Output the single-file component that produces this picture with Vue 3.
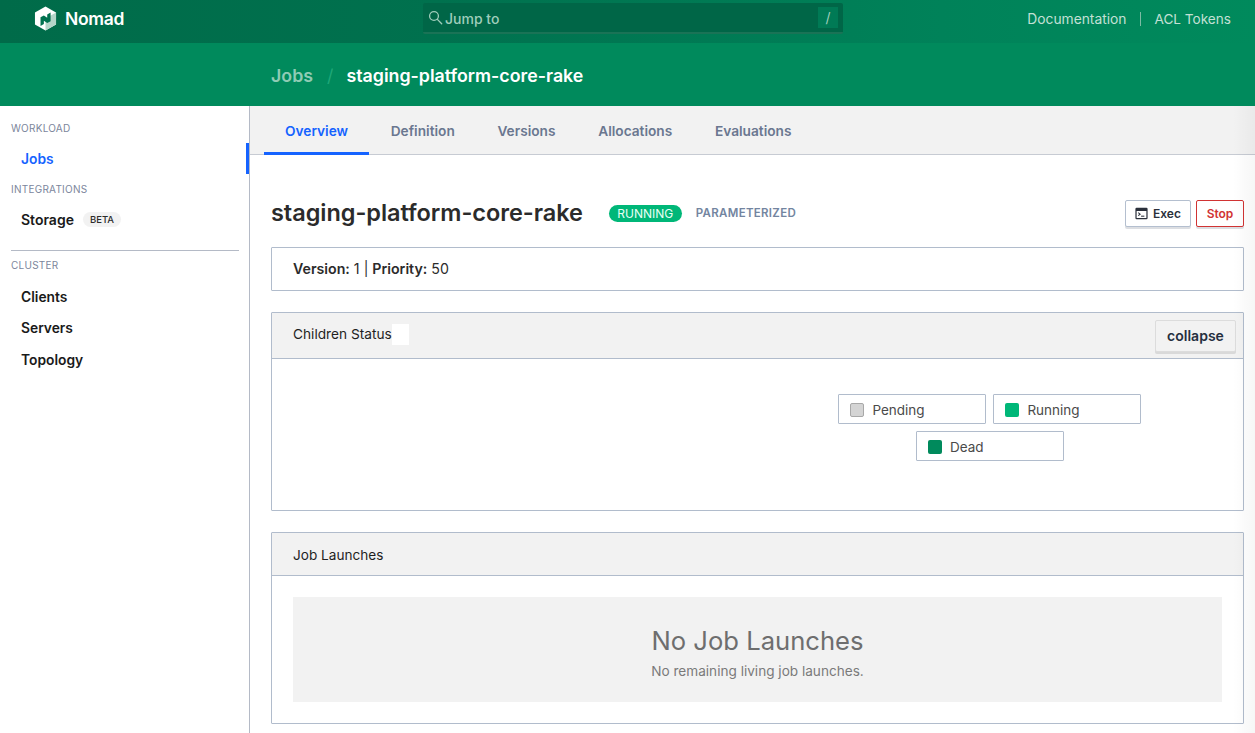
<template>
  <div class="page">
    <header class="topbar">
      <a class="brand">
        <svg class="logo" viewBox="0 0 24 26" width="23" height="25">
          <path d="M12 0.500 23 6.800v12.400L12 25.500 1 19.200V6.800z" fill="#fff" />
          <path d="M12 13 23 6.800v12.400L12 25.500z" fill="#b5d5c9" />
          <path d="M6.800 11.800 10.300 9.800 13.800 12.300V8.800L17.300 6.800V15.800L13.800 17.800 10.300 15.300V18.800L6.800 20.800z" fill="#00714f" />
        </svg>
        <span>Nomad</span>
      </a>
      <div class="search">
        <svg class="search-icon" viewBox="0 0 16 16" width="15" height="15">
          <circle cx="6.400" cy="6.400" r="4.700" fill="none" stroke="currentColor" stroke-width="1.400" />
          <path d="M10 10l4.600 4.600" stroke="currentColor" stroke-width="1.500" stroke-linecap="round" />
        </svg>
        <span class="search-text">Jump to</span>
        <span class="key">/</span>
      </div>
      <nav class="toplinks">
        <a class="doc">Documentation</a>
        <i></i>
        <a>ACL Tokens</a>
      </nav>
    </header>
    <div class="subbar">
      <span class="crumb-dim">Jobs</span>
      <span class="crumb-sep">/</span>
      <span class="crumb">staging-platform-core-rake</span>
    </div>
    <div class="body">
      <aside class="sidebar">
        <p class="label">WORKLOAD</p>
        <a class="side-link active">Jobs</a>
        <p class="label">INTEGRATIONS</p>
        <a class="side-link storage">Storage<span class="beta">BETA</span></a>
        <hr class="rule" />
        <p class="label cluster">CLUSTER</p>
        <a class="side-link tall">Clients</a>
        <a class="side-link tall">Servers</a>
        <a class="side-link tall">Topology</a>
      </aside>
      <main class="main">
        <div class="tabs">
          <a v-for="(t, i) in tabs" :key="t" class="tab" :class="{ on: i === 0 }">{{ t }}</a>
        </div>
        <section class="content">
          <div class="title-row">
            <h1>staging-platform-core-rake</h1>
            <span class="status">RUNNING</span>
            <span class="kind">PARAMETERIZED</span>
            <div class="actions">
              <button class="btn exec">
                <svg viewBox="0 0 16 16" width="13" height="13">
                  <path fill-rule="evenodd" d="M2 1h12a1.500 1.500 0 0 1 1.500 1.500v11A1.500 1.500 0 0 1 14 15H2a1.500 1.500 0 0 1-1.500-1.500v-11A1.500 1.500 0 0 1 2 1zM2 5v8.500h12V5z" fill="#2b303b" />
                  <path d="M4 7l2.300 1.800L4 10.600" fill="none" stroke="#2b303b" stroke-width="1.300" />
                  <path d="M7.500 11.300h4" stroke="#2b303b" stroke-width="1.300" />
                </svg>
                Exec
              </button>
              <button class="btn stop">Stop</button>
            </div>
          </div>
          <div class="box meta"><b>Version:</b> 1 | <b>Priority:</b> 50</div>
          <div class="box children">
            <div class="box-head tall-head">
              <span class="head-text">Children Status</span>
              <span class="white-chip"></span>
              <button class="collapse">collapse</button>
            </div>
            <div class="legend-body">
              <ul class="legend">
                <li v-for="l in legend" :key="l.name">
                  <span class="swatch" :class="l.cls"></span>{{ l.name }}
                </li>
              </ul>
            </div>
          </div>
          <div class="box launches">
            <div class="box-head low">Job Launches</div>
            <div class="launch-body">
              <div class="empty">
                <h3>No Job Launches</h3>
                <p>No remaining living job launches.</p>
              </div>
            </div>
          </div>
        </section>
      </main>
    </div>
    <div class="edge-shade"></div>
  </div>
</template>

<script setup>
const tabs = ['Overview', 'Definition', 'Versions', 'Allocations', 'Evaluations']
const legend = [
  { name: 'Pending', cls: 'pending' },
  { name: 'Running', cls: 'running' },
  { name: 'Dead', cls: 'dead' },
]
</script>

<style>
html, body { margin: 0; background: #fff; overflow: hidden; }
</style>

<style scoped>
.page {
  width: 1255px;
  height: 733px;
  overflow: hidden;
  position: relative;
  font-family: Inter, "Liberation Sans", sans-serif;
  font-size: 14px;
  color: #2b2b2b;
}
.edge-shade {
  position: absolute;
  top: 106px;
  right: 0;
  bottom: 0;
  width: 22px;
  background: linear-gradient(90deg, rgba(0, 0, 0, 0), rgba(0, 0, 0, 0.035));
  pointer-events: none;
}
.topbar {
  height: 43px;
  box-sizing: border-box;
  padding-bottom: 6px;
  display: flex;
  align-items: center;
  background: linear-gradient(90deg, #006b49 0%, #00714e 35%, #008259 75%, #008a5c 100%);
}
.brand {
  display: flex;
  align-items: center;
  gap: 8px;
  margin-left: 34px;
  width: 389px;
  color: #fff;
  font-size: 17.500px;
  font-weight: 600;
  letter-spacing: -0.3px;
}
.logo { flex: none; }
.search {
  width: 420px;
  height: 31px;
  box-sizing: border-box;
  display: flex;
  align-items: center;
  padding: 0 5px;
  background: #006647;
  border-bottom: 2px solid #1a7356;
  border-radius: 2px;
  color: #9fcdbb;
}
.search-icon { margin-right: 2px; flex: none; }
.search-text { font-weight: 500; font-size: 14px; margin-top: 1px; }
.key {
  margin-left: auto;
  width: 20px;
  height: 21px;
  background: #007a55;
  text-align: center;
  line-height: 21px;
  font-size: 14px;
}
.toplinks {
  margin-left: auto;
  margin-right: 24px;
  display: flex;
  align-items: center;
  color: #c3e0d5;
  font-size: 13.600px;
}
.doc { font-size: 13.800px; }
.toplinks i {
  width: 1px;
  height: 14px;
  background: #7dbba4;
  margin: 0 13px 0 14px;
}
.subbar {
  height: 63px;
  background: #008a5c;
  box-sizing: border-box;
  padding: 2px 0 0 271px;
  display: flex;
  align-items: center;
  font-size: 17.800px;
  font-weight: 600;
}
.crumb-dim { color: #8fcbb4; }
.crumb-sep { color: #1fa778; margin: 0 13px 0 14px; font-weight: 400; }
.crumb { color: #fff; }
.body { display: flex; height: 627px; }
.sidebar {
  width: 249px;
  flex: none;
  border-right: 1px solid #b4bac6;
  padding-top: 16px;
}
.label {
  margin: 0 0 0 11px;
  font-size: 10px;
  line-height: 12px;
  letter-spacing: 0.25px;
  color: #7c869c;
}
.cluster { margin-top: 8px; margin-bottom: 10px; }
.side-link {
  display: flex;
  align-items: center;
  height: 31px;
  padding-left: 21px;
  font-weight: 600;
  font-size: 13.800px;
  color: #1a1a1a;
  position: relative;
}
.side-link.tall { height: 31.500px; }
.side-link.active { color: #1563ff; margin: 9px 0; }
.side-link.active::after {
  content: "";
  position: absolute;
  right: 0;
  top: 0;
  width: 3px;
  height: 31px;
  background: #1563ff;
}
.storage { gap: 9px; margin-top: 9px; font-size: 14px; }
.beta {
  font-size: 9.500px;
  font-weight: 500;
  background: #f2f2f2;
  border-radius: 8px;
  padding: 0 7px;
  line-height: 15px;
  color: #2b2b2b;
}
.rule {
  border: 0;
  border-top: 1px solid #b4bac6;
  margin: 15px 10px 0 11px;
}
.main { flex: 1; min-width: 0; }
.tabs {
  height: 49px;
  box-sizing: border-box;
  background: #f2f2f2;
  border-bottom: 1px solid #c7cbd3;
  padding-left: 14px;
  display: flex;
  gap: 0.700px;
}
.tab {
  height: 49px;
  box-sizing: border-box;
  padding: 0 21px;
  line-height: 51px;
  font-weight: 600;
  font-size: 13.700px;
  color: #6a7790;
}
.tab.on {
  color: #1563ff;
  border-bottom: 3px solid #1563ff;
}
.content { padding: 0 11px 0 21px; }
.title-row {
  height: 92px;
  box-sizing: border-box;
  padding-top: 22px;
  display: flex;
  align-items: center;
}
h1 {
  margin: 0;
  font-size: 23.500px;
  font-weight: 600;
  color: #2b2b2b;
  letter-spacing: -0.05px;
}
.status {
  margin: 2px 0 0 26px;
  width: 73px;
  text-align: center;
  background: #00b778;
  color: #e8fff5;
  border-radius: 9px;
  font-size: 12px;
  line-height: 17px;
}
.kind {
  margin: 2px 0 0 14px;
  color: #7385a0;
  font-size: 11.500px;
  font-weight: 600;
  letter-spacing: 0.3px;
}
.actions { margin: 3px 0 0 auto; display: flex; gap: 5px; }
.btn {
  height: 27px;
  box-sizing: border-box;
  font: 600 12px Inter, sans-serif;
  background: #fff;
  border-radius: 2px;
  display: flex;
  align-items: center;
  justify-content: center;
  padding: 0;
  box-shadow: 0 2px 0 #dcdee2;
}
.exec {
  width: 66px;
  gap: 5px;
  border: 1px solid #b4bfcf;
  color: #2b303b;
}
.stop {
  width: 48px;
  border: 1px solid #d13333;
  color: #d13333;
}
.box {
  border: 1px solid #b1bccc;
  border-radius: 1px;
  box-sizing: border-box;
}
.meta {
  height: 44px;
  line-height: 42px;
  padding-left: 21px;
  font-size: 14.200px;
  color: #2b2b2b;
}
.meta b { font-weight: 600; }
.children { height: 199px; margin-top: 21px; }
.box-head {
  height: 43px;
  display: flex;
  align-items: center;
  padding-left: 21px;
  background: #f2f2f2;
  border-bottom: 1px solid #b1bccc;
  font-size: 13.700px;
  color: #1f1f1f;
  box-sizing: border-box;
}
.box-head.low { padding-top: 2px; font-size: 13.600px; }
.box-head.tall-head { height: 46px; }
.head-text { margin-bottom: 4px; }
.white-chip { width: 17px; height: 21px; margin-bottom: 3px; background: #fff; }
.collapse {
  margin-left: auto;
  margin-right: 7px;
  width: 81px;
  height: 32px;
  box-sizing: border-box;
  border: 1px solid #dcdcdc;
  background: #f2f2f2;
  box-shadow: 0 2px 0 #d9d9d9;
  border-radius: 2px;
  font: 600 14px Inter, sans-serif;
  color: #252f40;
  padding: 0;
}
.legend-body { height: 151px; display: flex; justify-content: flex-end; }
.legend {
  list-style: none;
  margin: 35px 98.100px 0 0;
  padding: 0;
  width: 310px;
  height: 67px;
  display: flex;
  flex-wrap: wrap;
  justify-content: center;
  align-content: flex-start;
  gap: 7px;
}
.legend li {
  width: 148px;
  height: 30px;
  box-sizing: border-box;
  border: 1px solid #b1bccc;
  border-radius: 1px;
  display: flex;
  align-items: center;
  padding: 2px 0 0 11px;
  font-size: 13.500px;
  color: #4a4a4a;
}
.swatch {
  width: 14px;
  height: 14px;
  border-radius: 2px;
  margin: -1px 8px 0 0;
  box-sizing: border-box;
}
.pending { background: #d4d4d4; border: 1px solid #a8a8a8; }
.running { background: #00b778; }
.dead { background: #008a5c; }
.launches { height: 192px; margin-top: 21px; }
.launch-body { padding: 21px; }
.empty {
  height: 105px;
  background: #f2f2f2;
  text-align: center;
  box-sizing: border-box;
  padding-top: 29px;
}
.empty h3 { margin: 0; color: #6e6e6e; font-size: 25.600px; font-weight: 400; line-height: 30px; }
.empty p { margin: 6px 0 0; color: #7a7a7a; font-size: 13.600px; line-height: 18px; }
</style>
